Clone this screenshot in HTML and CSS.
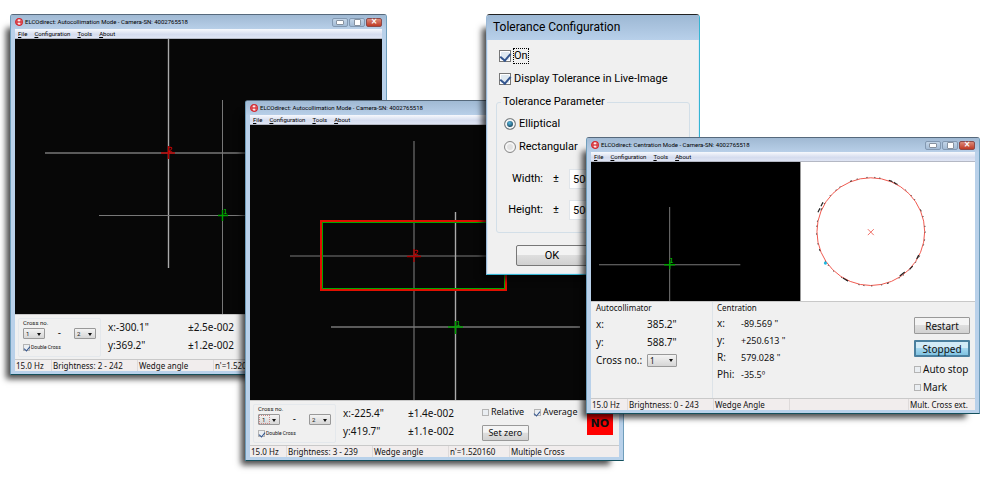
FILE: index.html
```html
<!DOCTYPE html>
<html lang="en">
<head>
<meta charset="utf-8">
<title>ELCOdirect</title>
<link rel="stylesheet" href="styles.css">
</head>
<body>
<svg class="defs" aria-hidden="true">
  <symbol id="logo" viewBox="0 0 16 16">
    <circle cx="8" cy="8" r="6.6" fill="#fbe9ea" stroke="#d3242b" stroke-width="2.6"/>
    <path d="M4.5 4v8M11.5 4v8" stroke="#d3242b" stroke-width="1.4"/>
    <path d="M2 8h12" stroke="#d3242b" stroke-width="2.4"/>
  </symbol>
</svg>
<main class="desktop">

  <section class="window win-a">
    <header class="titlebar">
      <svg class="logo"><use href="#logo"/></svg>
      <h1 class="title">ELCOdirect: Autocollimation Mode - Camera-SN: 4002765518</h1>
      <div class="controls"><button class="ctl min" aria-label="Minimize"></button><button class="ctl max" aria-label="Maximize"></button><button class="ctl close" aria-label="Close">×</button></div>
    </header>
    <nav class="menu"><a href="#"><u>F</u>ile</a><a href="#"><u>C</u>onfiguration</a><a href="#"><u>T</u>ools</a><a href="#"><u>A</u>bout</a></nav>
    <svg class="view" viewBox="0 0 367 275">
      <path d="M30 114H367" stroke="#777" stroke-width="1.4"/>
      <path d="M153.500 0V229" stroke="#aaa" stroke-width="1.4"/>
      <path d="M84 176.500H367M207.500 61V275" stroke="#777"/>
      <path d="M146 114h14M153.500 107v13" stroke="#b80000" stroke-width="1.4"/>
      <text class="mark red" x="153" y="113">2</text>
      <path d="M203 176.500h10M207.500 171v11" stroke="#00a000" stroke-width="1.4"/>
      <text class="mark green" x="208" y="175">1</text>
    </svg>
    <div class="panel">
      <fieldset class="cross">
        <legend>Cross no.</legend>
        <div class="pair"><span class="select"><select aria-label="First cross"><option>1</option></select></span><span>-</span><span class="select"><select aria-label="Second cross"><option>2</option></select></span></div>
        <label class="check"><input type="checkbox" checked>Double Cross</label>
      </fieldset>
      <div class="readings"><span>x:-300.1"</span><span>±2.5e-002</span><span>y:369.2"</span><span>±1.2e-002</span></div>
    </div>
    <footer class="status"><span class="c-rate">15.0 Hz</span><span class="c-bright">Brightness: 2 - 242</span><span class="c-mode">Wedge angle</span><span class="c-index">n'=1.520160</span><span class="c-rest">Multiple Cross</span></footer>
  </section>

  <section class="window win-b">
    <header class="titlebar">
      <svg class="logo"><use href="#logo"/></svg>
      <h1 class="title">ELCOdirect: Autocollimation Mode - Camera-SN: 4002765518</h1>
    </header>
    <nav class="menu"><a href="#"><u>F</u>ile</a><a href="#"><u>C</u>onfiguration</a><a href="#"><u>T</u>ools</a><a href="#"><u>A</u>bout</a></nav>
    <svg class="view" viewBox="0 0 369 275">
      <path d="M40 131H369" stroke="#555" stroke-width="1.4"/>
      <path d="M164 16V275" stroke="#555" stroke-width="1.6"/>
      <path d="M81 202H330" stroke="#777" stroke-width="1.4"/>
      <path d="M205.500 87V275" stroke="#aaa" stroke-width="1.4"/>
      <rect x="71" y="96" width="185" height="69" fill="none" stroke="#e01000" stroke-width="2"/>
      <rect x="72.500" y="97.500" width="182" height="66" fill="none" stroke="#00a800"/>
      <path d="M157 131.500h14M164 124v13" stroke="#a80000" stroke-width="1.4"/>
      <text class="mark red" x="164" y="130">2</text>
      <path d="M198 202h15M205.500 196v13" stroke="#00a000" stroke-width="1.4"/>
      <text class="mark green" x="206" y="201">1</text>
    </svg>
    <div class="panel">
      <fieldset class="cross">
        <legend>Cross no.</legend>
        <div class="pair"><span class="select focus"><select aria-label="First cross"><option>1</option></select></span><span>-</span><span class="select"><select aria-label="Second cross"><option>2</option></select></span></div>
        <label class="check"><input type="checkbox" checked>Double Cross</label>
      </fieldset>
      <div class="readings near"><span>x:-225.4"</span><span>±1.4e-002</span><span>y:419.7"</span><span>±1.1e-002</span></div>
      <div class="options">
        <label class="check"><input type="checkbox">Relative</label><label class="check"><input type="checkbox" checked>Average</label>
        <button class="btn">Set zero</button>
      </div>
      <strong class="verdict">NO</strong>
    </div>
    <footer class="status"><span class="c-rate">15.0 Hz</span><span class="c-bright">Brightness: 3 - 239</span><span class="c-mode">Wedge angle</span><span class="c-index">n'=1.520160</span><span class="c-rest">Multiple Cross</span></footer>
  </section>

  <section class="dialog">
    <h1 class="dialog-title">Tolerance Configuration</h1>
    <form class="dialog-body">
      <label class="check"><input type="checkbox" checked><span class="focused">On</span></label>
      <label class="check"><input type="checkbox" checked>Display Tolerance in Live-Image</label>
      <fieldset class="tolerance">
        <legend>Tolerance Parameter</legend>
        <label class="radio"><input type="radio" name="shape" checked>Elliptical</label>
        <label class="radio"><input type="radio" name="shape">Rectangular</label>
        <div class="sizes">
          <label for="w">Width:</label><span>±</span><input id="w" type="text" value="500">
          <label for="h">Height:</label><span>±</span><input id="h" type="text" value="500">
        </div>
      </fieldset>
      <button type="button" class="ok">OK</button>
    </form>
  </section>

  <section class="window win-c">
    <header class="titlebar">
      <svg class="logo"><use href="#logo"/></svg>
      <h1 class="title">ELCOdirect: Centration Mode - Camera-SN: 4002765518</h1>
      <div class="controls"><button class="ctl min" aria-label="Minimize"></button><button class="ctl max" aria-label="Maximize"></button><button class="ctl close" aria-label="Close">×</button></div>
    </header>
    <nav class="menu"><a href="#"><u>F</u>ile</a><a href="#"><u>C</u>onfiguration</a><a href="#"><u>T</u>ools</a><a href="#"><u>A</u>bout</a></nav>
    <div class="views">
      <svg class="view live" viewBox="0 0 209 139">
        <path d="M8 102.500H149M78.500 45V139" stroke="#777"/>
        <path d="M73 102.500h11M78.500 98v9" stroke="#00a000" stroke-width="1.4"/>
        <text class="mark green" x="78" y="101">1</text>
      </svg>
      <svg class="plot" viewBox="0 0 174 139">
        <circle cx="70" cy="69.500" r="54" fill="none" stroke="#f05a50"/>
        <circle cx="70" cy="69.500" r="54.500" fill="none" stroke="#222" stroke-dasharray="1 7 1 4 1 11 2 5 1 9"/>
        <path d="M88 18l3 1M93 20l3 2M17 50l2-4M20 44l2-4M42 116l5 3M99 114l5-4M109 107l3-3M116 97l2-4" stroke="#222" stroke-width="1.2"/>
        <path d="M67 67l6 6M73 67l-6 6" stroke="#f07068"/>
        <circle cx="24.500" cy="101" r="1.600" fill="#20b8e0"/>
      </svg>
    </div>
    <div class="panel wide">
      <section class="group auto">
        <h2>Autocollimator</h2>
        <dl><dt>x:</dt><dd>385.2"</dd><dt>y:</dt><dd>588.7"</dd><dt><label for="cross">Cross no.:</label></dt><dd><span class="select big"><select id="cross"><option>1</option></select></span></dd></dl>
      </section>
      <section class="group cent">
        <h2>Centration</h2>
        <dl><dt>x:</dt><dd>-89.569 "</dd><dt>y:</dt><dd>+250.613 "</dd><dt>R:</dt><dd>579.028 "</dd><dt>Phi:</dt><dd>-35.5º</dd></dl>
      </section>
      <div class="actions">
        <button class="btn">Restart</button>
        <button class="btn active">Stopped</button>
        <label class="check"><input type="checkbox">Auto stop</label>
        <label class="check"><input type="checkbox">Mark</label>
      </div>
    </div>
    <footer class="status"><span class="c-rate">15.0 Hz</span><span class="c-bright">Brightness: 0 - 243</span><span class="c-mode">Wedge Angle</span><span class="c-rest"></span><span class="c-ext">Mult. Cross ext.</span></footer>
  </section>
</main>
</body>
</html>
```
FILE: styles.css
```css
* { box-sizing: border-box; }

body {
  margin: 0;
  background: #fff;
  color: #111;
  font: 10px/12px "Noto Sans", "Open Sans", sans-serif;
}

.defs { display: none; }
h1, h2, dl, dd, fieldset { margin: 0; }
button, input, select { margin: 0; padding: 0; font: inherit; color: inherit; }

.desktop { position: relative; min-height: 100vh; overflow: hidden; }

/* windows */
.window {
  position: absolute;
  padding: 0 4px 3px;
  border: 1px solid #6f9dbb;
  border-top-color: #56697c;
  border-bottom-color: #14505c;
  border-radius: 3px 3px 0 0;
  background: #b9d1ea;
  box-shadow: -9px 9px 6px -5px rgba(0, 0, 0, .7);
}
.win-a { left: 10px; top: 14px; width: 377px; }
.win-b { left: 245px; top: 100px; width: 379px; }
.win-c { left: 586px; top: 137px; width: 394px; }

.titlebar {
  display: flex;
  align-items: center;
  gap: 2px;
  height: 14px;
  margin: 0 -4px;
  padding: 0 4px;
  border-radius: 2px 2px 0 0;
  background: linear-gradient(#a0b9d3, #b8cfe8);
}
.logo { width: 8px; height: 8px; }
.title { flex: 1; font: 6px/8px Roboto, sans-serif; color: #000; white-space: nowrap; }
.controls { display: flex; gap: 1px; }
.ctl {
  width: 16px;
  height: 9px;
  border: 1px solid #8399b2;
  border-radius: 2px;
  background: linear-gradient(#c3d5e8, #a3bbd5);
  display: grid;
  place-items: center;
  font: bold 8px/6px "DejaVu Sans", sans-serif;
  color: #fff;
}
.min::before, .max::before { content: ""; width: 6px; height: 3px; border: 1px solid #8792a0; background: #fff; border-radius: 1px; }
.max::before { width: 5px; height: 5px; }
.close { border-color: #8b4a4a; background: linear-gradient(#db8a7a, #c03a24); }

.menu {
  display: flex;
  gap: 7px;
  height: 10px;
  padding: 0 3px;
  background: linear-gradient(#f7f9fd, #d5dcee 60%, #dfe5f4);
  border-bottom: 1px solid #b4b8c4;
  font: 6px/9px Roboto, sans-serif;
}
.menu a { color: #000; text-decoration: none; }

.view { display: block; width: 100%; background: #070707; }
.mark { font: 7px "DejaVu Sans", sans-serif; }
.red { fill: #f00000; }
.green { fill: #00d000; }

.panel {
  display: flex;
  height: 45px;
  padding: 3px 3px 0;
  background: #f0f0f0;
  border-top: 1px solid #c8c8c8;
}
.cross {
  width: 83px;
  height: 39px;
  padding: 0 4px;
  border: 1px solid #e4e8ec;
  border-radius: 2px;
  font: 6px/7px Roboto, sans-serif;
}
.cross legend { float: left; width: 100%; padding: 0; }
.pair { clear: both; display: flex; justify-content: space-between; align-items: center; padding-top: 2px; font-size: 10px; }
.cross .check { margin-top: 5px; font-size: 5px; gap: 1px; }

.select {
  position: relative;
  display: inline-flex;
  width: 22px;
  height: 11px;
  border: 1px solid #999;
  border-radius: 1px;
  background: linear-gradient(#f3f3f3, #d6d6d6);
}
.select select { width: 100%; padding-left: 2px; border: 0; background: none; appearance: none; font-size: 6px; line-height: 9px; }
.select::after { content: ""; position: absolute; right: 3px; top: 4px; border: 2px solid transparent; border-top: 3px solid #111; border-bottom: 0; pointer-events: none; }
.select.focus select { width: 11px; border: 1px dotted #c88; line-height: 7px; }
.select.big { width: 30px; height: 13px; }
.select.big select { font-size: 8px; line-height: 11px; }

.check { display: flex; align-items: center; gap: 2px; white-space: nowrap; }
.check input {
  flex: none;
  display: grid;
  place-items: center;
  width: 7px;
  height: 7px;
  border: 1px solid #b4b4b4;
  background: #eaeef2;
  appearance: none;
}
.check input:checked::before { content: ""; width: 3px; height: 5px; margin-bottom: 1px; border: solid #34568f; border-width: 0 1px 1px 0; rotate: 40deg; }

.readings {
  display: grid;
  grid-template-columns: 80px auto;
  align-content: start;
  padding: 0 0 0 7px;
  line-height: 18px;
  white-space: nowrap;
}
.near { grid-template-columns: 65px auto; }
.options {
  display: grid;
  grid-template-columns: 52px 46px;
  align-content: start;
  gap: 7px 0;
  padding: 2px 0 0 28px;
  font-size: 9px;
}
.btn {
  height: 17px;
  border: 1px solid #999;
  border-radius: 1px;
  background: linear-gradient(#f4f4f4 45%, #dedede 50%, #d2d2d2);
  font-size: 10px;
}
.btn.active {
  border: 2px solid #4a7f9e;
  background: linear-gradient(#d2ebf7 45%, #a5d6ee 50%, #7fc3e2);
}
.options .btn { width: 47px; height: 16px; font-size: 9px; }
.verdict {
  width: 26px;
  height: 26px;
  margin: 5px 0 0 7px;
  background: #f00;
  font: bold 11px/29px "DejaVu Sans", sans-serif;
  text-align: center;
}

.status {
  display: flex;
  height: 12px;
  border-top: 1px solid #c9c9c9;
  background: #f1eded;
  font-size: 8px;
  line-height: 11px;
  white-space: nowrap;
  overflow: hidden;
}
.status span { padding-left: 1px; border-left: 1px solid #dedada; }
.status .c-rate { width: 36px; border: 0; }
.c-bright { width: 86px; }
.c-mode { width: 76px; }
.c-index { width: 61px; }
.c-rest { flex: 1; }
.c-ext { width: 67px; }

/* centration window */
.views { display: flex; background: #fff; }
.live { width: auto; flex: 210; background: #000; }
.plot { flex: 174; border-left: 1px solid #999; }
.wide { height: 97px; padding: 0 5px; }
.group { padding-top: 1px; }
.group h2 { font: 8px/10px "Noto Sans", sans-serif; }
.group dl { display: grid; padding-top: 2px; }
.group dt, .group dd { white-space: nowrap; }
.auto { width: 117px; border-right: 1px solid #dde3e8; }
.auto dl { grid-template-columns: 51px auto; line-height: 18px; }
.auto dd { display: flex; align-items: center; }
.cent { flex: 1; padding-left: 4px; }
.cent dl { grid-template-columns: 24px auto; line-height: 17px; }
.cent dd { font-size: 9px; }
.actions { display: grid; align-content: start; gap: 6px; width: 56px; padding-top: 15px; }

/* tolerance dialog */
.dialog {
  position: absolute;
  left: 486px;
  top: 14px;
  width: 214px;
  padding: 0 1px 1px;
  border: 1px solid #35b5d2;
  border-top-color: #222;
  border-left-color: #9ab8d6;
  border-radius: 4px 4px 0 0;
  background: #dbe8f5;
  box-shadow: -9px 9px 6px -5px rgba(0, 0, 0, .7);
  color: #000;
  font: 11px/14px Roboto, sans-serif;
}
.dialog-title {
  margin: 0 -1px;
  padding: 0 6px;
  border-radius: 3px 3px 0 0;
  background: linear-gradient(#9db8d4, #b8d0ea);
  font: 12px/25px Roboto, sans-serif;
}
.dialog-body { display: grid; justify-items: start; gap: 9px; padding: 9px 8px 7px; background: #f0f0f0; }
.dialog-body > .check { padding-left: 3px; }
.dialog .check { gap: 3px; }
.dialog .check input { width: 12px; height: 12px; border-color: #777; background: #dfe9f1; box-shadow: inset 0 0 0 1px #fff; }
.dialog .check input:checked::before { width: 5px; height: 8px; border-width: 0 2px 2px 0; }
.focused { outline: 1px dotted #000; }
.tolerance {
  display: grid;
  align-content: start;
  justify-self: stretch;
  gap: 9px;
  height: 138px;
  padding: 8px 6px 0;
  border: 1px solid #d3dfe8;
  border-radius: 3px;
}
.tolerance legend { padding: 0 2px; margin-left: -2px; }
.radio { display: flex; align-items: center; gap: 3px; }
.radio input { width: 12px; height: 12px; margin-left: 1px; border: 1px solid #888; border-radius: 50%; background: #e2e2e2; appearance: none; box-shadow: inset 0 0 0 2px #f5f5f5; }
.radio input:checked { background: radial-gradient(circle at 45% 40%, #59b8e0, #0e3348 60%); }
.sizes { display: grid; grid-template-columns: 40px 10px 52px; gap: 11px 8px; align-items: center; padding-top: 6px; }
.sizes label { text-align: right; }
.sizes span { text-align: center; }
.sizes input { width: 100%; height: 20px; padding: 0 3px; border: 1px solid #e0e5ea; background: #fff; }
.ok { width: 72px; height: 21px; margin: 3px 0 0 20px; border: 1px solid #777; border-radius: 2px; background: linear-gradient(#f3f3f3 48%, #dedede 50%, #d0d0d0); }
```
